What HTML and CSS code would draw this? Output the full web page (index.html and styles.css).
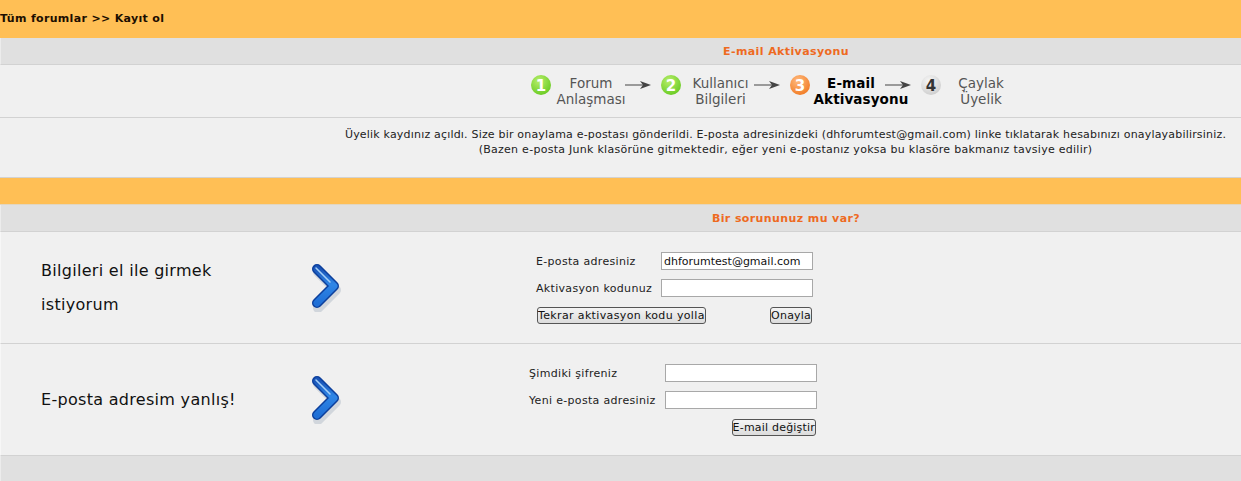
FILE: index.html
```html
<!DOCTYPE html>
<html lang="tr">
<head>
<meta charset="utf-8">
<title>Kayıt ol</title>
<link rel="stylesheet" href="styles.css">
</head>
<body>
<svg class="defs" width="0" height="0" aria-hidden="true">
  <defs>
    <linearGradient id="blue" x1="0" y1="0" x2="0" y2="1">
      <stop offset="0" stop-color="#1a55b8"/>
      <stop offset=".45" stop-color="#2f86e6"/>
      <stop offset="1" stop-color="#1f6fd6"/>
    </linearGradient>
    <radialGradient id="green" cx=".4" cy=".3" r=".8">
      <stop offset="0" stop-color="#b8ee6c"/>
      <stop offset="1" stop-color="#62c81c"/>
    </radialGradient>
    <radialGradient id="orange" cx=".4" cy=".3" r=".8">
      <stop offset="0" stop-color="#ffbb80"/>
      <stop offset="1" stop-color="#f0761c"/>
    </radialGradient>
    <radialGradient id="grey" cx=".4" cy=".3" r=".8">
      <stop offset="0" stop-color="#f6f6f6"/>
      <stop offset="1" stop-color="#cacaca"/>
    </radialGradient>
    <symbol id="chevron" viewBox="0 0 30 48">
      <path d="M6 6 L24 24 L6 42" fill="none" stroke="#8a9ab0" stroke-opacity=".3" stroke-width="10" stroke-linecap="round" stroke-linejoin="round" transform="translate(1 2)"/>
      <path d="M6 5 L23 22 L6 39" fill="none" stroke="#0c3f9c" stroke-width="10" stroke-linecap="round" stroke-linejoin="round"/>
      <path d="M6 5 L23 22 L6 39" fill="none" stroke="url(#blue)" stroke-width="7" stroke-linecap="round" stroke-linejoin="round"/>
      <path d="M5 4 L19 18" fill="none" stroke="#a5d0f8" stroke-width="1.5" stroke-linecap="round"/>
    </symbol>
    <symbol id="next" viewBox="0 0 26 10">
      <path d="M0 5 H20" stroke="#444" stroke-width="1"/>
      <path d="M15 1 L26 5 L15 9 L18 5 Z" fill="#444"/>
    </symbol>
  </defs>
</svg>

<header class="crumb">Tüm forumlar &gt;&gt; Kayıt ol</header>

<h2 class="title">E-mail Aktivasyonu</h2>

<section class="steps">
  <div class="step">
    <svg class="badge" viewBox="0 0 20 20"><circle cx="10" cy="10" r="10" fill="url(#green)"/><text x="10" y="15.5" class="badge-num badge-light">1</text></svg>
    <span class="step-label">Forum<br>Anlaşması</span>
  </div>
  <svg class="next"><use href="#next"/></svg>
  <div class="step">
    <svg class="badge" viewBox="0 0 20 20"><circle cx="10" cy="10" r="10" fill="url(#green)"/><text x="10" y="15.5" class="badge-num badge-light">2</text></svg>
    <span class="step-label step-second">Kullanıcı<br>Bilgileri</span>
  </div>
  <svg class="next"><use href="#next"/></svg>
  <div class="step">
    <svg class="badge" viewBox="0 0 20 20"><circle cx="10" cy="10" r="10" fill="url(#orange)"/><text x="10" y="15.5" class="badge-num badge-light">3</text></svg>
    <span class="step-label step-current"><span class="step-first-line">E-mail</span><br>Aktivasyonu</span>
  </div>
  <svg class="next next-current"><use href="#next"/></svg>
  <div class="step">
    <svg class="badge" viewBox="0 0 20 20"><circle cx="10" cy="10" r="10" fill="url(#grey)"/><text x="10" y="15.5" class="badge-num badge-dark">4</text></svg>
    <span class="step-label">Çaylak<br>Üyelik</span>
  </div>
</section>

<section class="message">
  <p>Üyelik kaydınız açıldı. Size bir onaylama e-postası gönderildi. E-posta adresinizdeki (dhforumtest@gmail.com) linke tıklatarak hesabınızı onaylayabilirsiniz.<br><span class="message-note">(Bazen e-posta Junk klasörüne gitmektedir, eğer yeni e-postanız yoksa bu klasöre bakmanız tavsiye edilir)</span></p>
</section>

<div class="band"></div>

<h2 class="title">Bir sorununuz mu var?</h2>

<section class="option">
  <p class="option-text">Bilgileri el ile girmek<br>istiyorum</p>
  <svg class="chevron"><use href="#chevron"/></svg>
  <form class="form form-one">
    <label class="field"><span>E-posta adresiniz</span><input type="text" value="dhforumtest@gmail.com"></label>
    <label class="field"><span>Aktivasyon kodunuz</span><input type="text"></label>
    <div class="actions actions-split">
      <button type="button">Tekrar aktivasyon kodu yolla</button>
      <button type="button" class="btn-tight">Onayla</button>
    </div>
  </form>
</section>

<section class="option">
  <p class="option-text">E-posta adresim yanlış!</p>
  <svg class="chevron"><use href="#chevron"/></svg>
  <form class="form form-two">
    <label class="field"><span>Şimdiki şifreniz</span><input type="text"></label>
    <label class="field"><span>Yeni e-posta adresiniz</span><input type="text"></label>
    <div class="actions actions-end">
      <button type="button" class="btn-tight">E-mail değiştir</button>
    </div>
  </form>
</section>

<div class="foot"></div>
</body>
</html>
```

FILE: styles.css
```css
* { box-sizing: border-box; }
html, body { margin: 0; padding: 0; }
body {
  width: 1241px;
  height: 481px;
  overflow: hidden;
  background: #e0e0e0;
  font-family: "DejaVu Sans", Verdana, sans-serif;
  font-size: 11px;
  letter-spacing: .19px;
  color: #222;
}
.defs { position: absolute; }

.crumb {
  height: 38px;
  padding-top: 12px;
  line-height: 13px;
  background: #ffbf55;
  font-weight: bold;
  letter-spacing: .33px;
  color: #1c0e00;
}

.title {
  margin: 0;
  height: 27px;
  padding-left: 330px;
  border-left: 1px solid #ececec;
  border-bottom: 1px solid #d2d2d2;
  background: #e0e0e0;
  text-align: center;
  font-size: 11px;
  line-height: 27px;
  font-weight: bold;
  letter-spacing: .4px;
  color: #ee6a1f;
}

.steps {
  height: 53px;
  padding: 8px 0 0 531px;
  display: flex;
  align-items: flex-start;
  background: #f0f0f0;
  border-bottom: 1px solid #d2d2d2;
}
.step { display: flex; align-items: flex-start; }
.badge { width: 20px; height: 20px; margin-top: 2px; flex: none; }
.badge-num { font: bold 15px "DejaVu Sans", sans-serif; text-anchor: middle; }
.badge-light { fill: #fff; }
.badge-dark { fill: #333; }
.step-label {
  width: 80px;
  padding-top: 2px;
  text-align: center;
  font-size: 13.5px;
  line-height: 16px;
  letter-spacing: 0;
  color: #555;
}
.step-second { width: 79px; }
.step-current { width: 102px; color: #000; font-weight: bold; letter-spacing: .1px; }
.step-first-line { display: inline-block; margin-right: 20px; }
.next { width: 26px; height: 10px; margin: 7px 10px 0 -6px; flex: none; }
.next-current { margin-left: -27px; }

.message {
  height: 60px;
  padding: 9px 14px 0 344px;
  background: #f0f0f0;
  border-bottom: 1px solid #d2d2d2;
}
.message p { margin: 0; text-align: center; line-height: 15px; white-space: nowrap; }
.message-note { letter-spacing: .27px; }

.band {
  height: 27px;
  background: #ffbf55;
  border-bottom: 1px solid #e2d6c0;
}

.option {
  height: 112px;
  display: flex;
  align-items: center;
  background: #f0f0f0;
  border-left: 1px solid #f7f7f7;
  border-bottom: 1px solid #d2d2d2;
}
.option-text {
  width: 270px;
  margin: 0 0 0 40px;
  flex: none;
  font-size: 16px;
  line-height: 34px;
  letter-spacing: .3px;
  color: #111;
}
.chevron { width: 30px; height: 48px; flex: none; margin-top: 0; }

.form { flex: none; align-self: flex-start; display: flex; flex-direction: column; padding-top: 15px; }
.form-one { margin-left: 195px; width: 277px; }
.form-two { margin-left: 188px; width: 288px; }
.field { display: flex; justify-content: space-between; height: 27px; }
.field span { line-height: 18px; margin-top: 6px; letter-spacing: .32px; }
.field input {
  width: 152px;
  height: 18px;
  margin-top: 5px;
  padding: 0 2px;
  border: 1px solid #a8a8a8;
  background: #fff;
  font: 11px "DejaVu Sans", sans-serif;
  color: #111;
  outline: none;
}
.actions { display: flex; height: 17px; margin-top: 6px; }
.actions-split { justify-content: space-between; padding: 0 1px; }
.actions-end { justify-content: flex-end; padding-right: 1px; }
button {
  height: 17px;
  padding: 0;
  border: 1px solid #555;
  border-radius: 3px;
  background: linear-gradient(#f4f4f4, #dcdcdc);
  font: 11px "DejaVu Sans", sans-serif;
  letter-spacing: .36px;
  line-height: 14px;
  color: #111;
}
.btn-tight { letter-spacing: .2px; }

.foot { height: 26px; background: #e0e0e0; border-left: 1px solid #ececec; }
```
